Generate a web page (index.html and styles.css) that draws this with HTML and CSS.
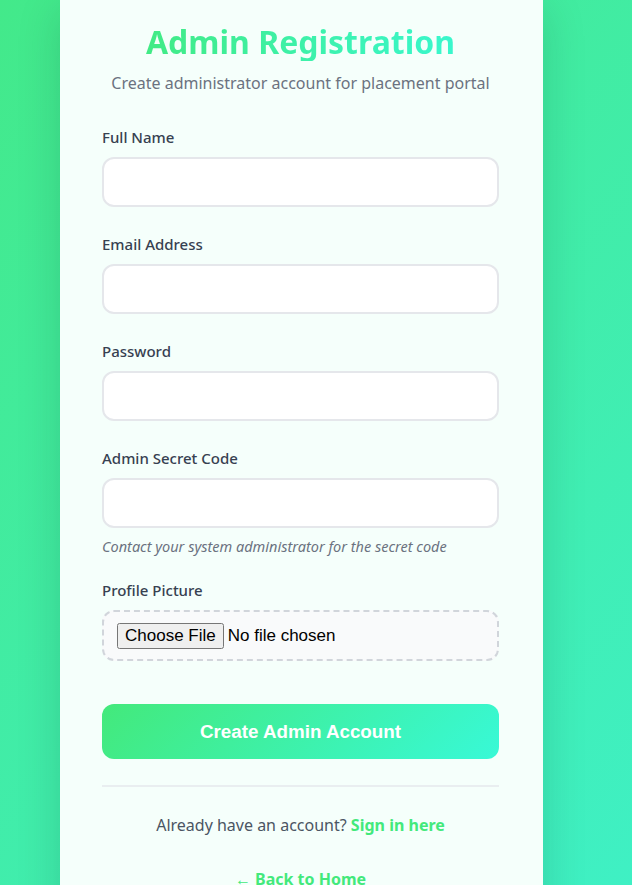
FILE: index.html
```html
<!DOCTYPE html>
<html lang="en">
<head>
<meta charset="utf-8">
<title>Admin Registration</title>
<link rel="stylesheet" href="styles.css">
</head>
<body>
<div class="page">
  <div class="card">
    <h1 class="title">Admin Registration</h1>
    <p class="subtitle">Create administrator account for placement portal</p>
    <form class="form">
      <div class="group">
        <label class="label">Full Name</label>
        <input class="input" type="text">
      </div>
      <div class="group">
        <label class="label">Email Address</label>
        <input class="input" type="email">
      </div>
      <div class="group">
        <label class="label">Password</label>
        <input class="input" type="password">
      </div>
      <div class="group group-hint">
        <label class="label">Admin Secret Code</label>
        <input class="input" type="password">
        <p class="hint">Contact your system administrator for the secret code</p>
      </div>
      <div class="group">
        <label class="label">Profile Picture</label>
        <div class="filebox"><input class="file" type="file"></div>
      </div>
      <button class="submit" type="button">Create Admin Account</button>
    </form>
    <div class="divider"></div>
    <p class="signin">Already have an account? <a class="link" href="#">Sign in here</a></p>
    <p class="back"><a class="link" href="#">← Back to Home</a></p>
  </div>
</div>
</body>
</html>
```

FILE: styles.css
```css
html, body {
  margin: 0;
  padding: 0;
  height: 100%;
}
body {
  background: linear-gradient(135deg, #43e98a 0%, #3ff0c4 100%);
  font-family: "Noto Sans", "Open Sans", sans-serif;
  overflow: hidden;
}
.page {
  padding-left: 60px;
}
.card {
  width: 483px;
  box-sizing: border-box;
  background: #f5fffb;
  padding: 23px 44px 40px 42px;
  box-shadow: 0 10px 40px rgba(0, 60, 40, 0.18);
  min-height: 900px;
}
.title {
  margin: 0;
  text-align: center;
  font-size: 32px;
  line-height: 38px;
  font-weight: 700;
  background: linear-gradient(90deg, #43e97b, #38f9d7);
  -webkit-background-clip: text;
  background-clip: text;
  color: transparent;
}
.subtitle {
  margin: 10px 0 0;
  text-align: center;
  color: #6b7280;
  font-size: 16px;
  line-height: 24px;
}
.form {
  margin-top: 32px;
}
.group {
  margin-bottom: 27px;
}
.label {
  display: block;
  font-size: 15px;
  line-height: 20px;
  font-weight: 500;
  color: #374151;
  margin-bottom: 10px;
}
.input {
  display: block;
  width: 100%;
  box-sizing: border-box;
  height: 50px;
  border: 2px solid #e5e7eb;
  border-radius: 12px;
  background: #ffffff;
  outline: none;
}
.hint {
  margin: 9px 0 0;
  font-size: 14.5px;
  line-height: 18px;
  font-style: italic;
  color: #6b7280;
}
.group-hint {
  margin-bottom: 25px;
}
.filebox {
  box-sizing: border-box;
  height: 51px;
  border: 2px dashed #d1d5db;
  border-radius: 12px;
  background: #f9fafb;
  padding: 12px 13px;
  display: flex;
  align-items: center;
}
.file {
  font-family: "Liberation Sans", Arial, sans-serif;
  font-size: 17px;
}
.submit {
  display: block;
  width: 100%;
  height: 55px;
  margin-top: 43px;
  border: none;
  border-radius: 12px;
  background: linear-gradient(135deg, #43e97b 0%, #38f9d7 100%);
  color: #ffffff;
  font-family: "Liberation Sans", Arial, sans-serif;
  font-size: 18.8px;
  font-weight: 700;
}
.divider {
  height: 2px;
  background: #e9eef0;
  margin-top: 26px;
}
.signin {
  margin: 26px 0 0;
  text-align: center;
  font-size: 16px;
  line-height: 24px;
  color: #4b5563;
}
.back {
  margin: 30px 0 0;
  text-align: center;
  font-size: 16px;
  line-height: 24px;
}
.link {
  color: #43e97b;
  font-weight: 700;
  text-decoration: none;
}
```
